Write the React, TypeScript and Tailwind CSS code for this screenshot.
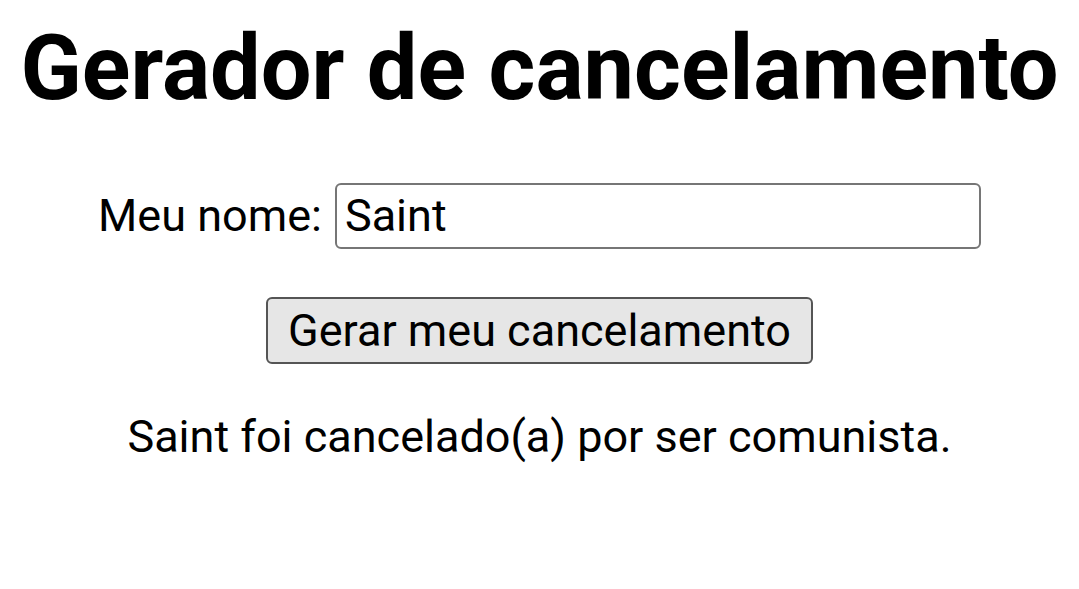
import React, { useState } from 'react';

const App: React.FC = () => {
  const [name, setName] = useState('Saint');
  const [result, setResult] = useState('Saint foi cancelado(a) por ser comunista.');

  const handleGenerate = () => {
    setResult(`${name} foi cancelado(a) por ser comunista.`);
  };

  return (
    <div className="min-h-screen bg-white text-black flex flex-col items-center font-['Roboto',sans-serif] text-[45px]">
      <h1 className="mt-[15px] text-[90px] font-bold leading-[1.2]">Gerador de cancelamento</h1>
      <div className="mt-[59px] flex items-center gap-[13px]">
        <label htmlFor="nome">Meu nome:</label>
        <input
          id="nome"
          type="text"
          value={name}
          onChange={(e) => setName(e.target.value)}
          className="w-[646px] h-[66px] border-[2.5px] border-[#767676] rounded-[6px] px-[8px] text-[45px] leading-none outline-none"
        />
      </div>
      <button
        onClick={handleGenerate}
        className="mt-[47px] h-[67px] px-[20px] bg-[#e6e6e6] border-[2.5px] border-[#555] rounded-[6px] text-[45px] leading-none"
      >
        Gerar meu cancelamento
      </button>
      <p className="mt-[46px] leading-[1.2]">{result}</p>
    </div>
  );
};

export default App;
